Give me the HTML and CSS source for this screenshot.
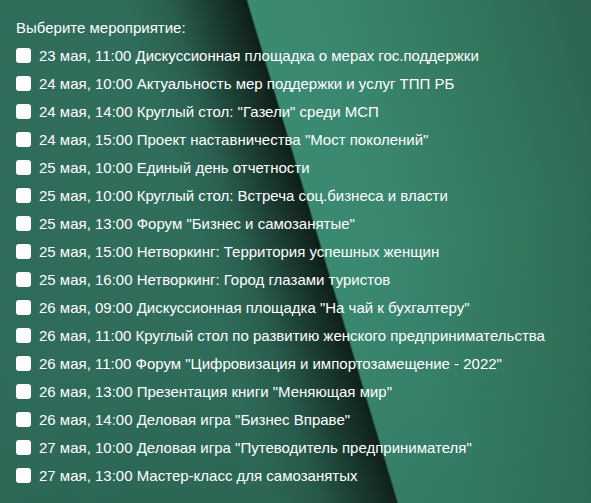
FILE: index.html
```html
<!DOCTYPE html>
<html lang="ru">
<head>
<meta charset="utf-8">
<title>Мероприятия</title>
<link rel="stylesheet" href="styles.css">
</head>
<body>
<form class="events">
  <div class="events__title">Выберите мероприятие:</div>
  <label class="event"><input type="checkbox" class="event__box"><span>23 мая, 11:00 Дискуссионная площадка о мерах гос.поддержки</span></label>
  <label class="event"><input type="checkbox" class="event__box"><span>24 мая, 10:00 Актуальность мер поддержки и услуг ТПП РБ</span></label>
  <label class="event"><input type="checkbox" class="event__box"><span>24 мая, 14:00 Круглый стол: "Газели" среди МСП</span></label>
  <label class="event"><input type="checkbox" class="event__box"><span>24 мая, 15:00 Проект наставничества "Мост поколений"</span></label>
  <label class="event"><input type="checkbox" class="event__box"><span>25 мая, 10:00 Единый день отчетности</span></label>
  <label class="event"><input type="checkbox" class="event__box"><span>25 мая, 10:00 Круглый стол: Встреча соц.бизнеса и власти</span></label>
  <label class="event"><input type="checkbox" class="event__box"><span>25 мая, 13:00 Форум "Бизнес и самозанятые"</span></label>
  <label class="event"><input type="checkbox" class="event__box"><span>25 мая, 15:00 Нетворкинг: Территория успешных женщин</span></label>
  <label class="event"><input type="checkbox" class="event__box"><span>25 мая, 16:00 Нетворкинг: Город глазами туристов</span></label>
  <label class="event"><input type="checkbox" class="event__box"><span>26 мая, 09:00 Дискуссионная площадка "На чай к бухгалтеру"</span></label>
  <label class="event"><input type="checkbox" class="event__box"><span>26 мая, 11:00 Круглый стол по развитию женского предпринимательства</span></label>
  <label class="event"><input type="checkbox" class="event__box"><span>26 мая, 11:00 Форум "Цифровизация и импортозамещение - 2022"</span></label>
  <label class="event"><input type="checkbox" class="event__box"><span>26 мая, 13:00 Презентация книги "Меняющая мир"</span></label>
  <label class="event"><input type="checkbox" class="event__box"><span>26 мая, 14:00 Деловая игра "Бизнес Вправе"</span></label>
  <label class="event"><input type="checkbox" class="event__box"><span>27 мая, 10:00 Деловая игра "Путеводитель предпринимателя"</span></label>
  <label class="event"><input type="checkbox" class="event__box"><span>27 мая, 13:00 Мастер-класс для самозанятых</span></label>
</form>
</body>
</html>
```
FILE: styles.css
```css
html {
  height: 100%;
  background-color: #2f6b5a;
  background-image:
    linear-gradient(160deg, rgba(0,0,0,0) 55%, rgba(20,50,40,0.2) 100%),
    linear-gradient(73.3deg,
      #2f6b5a 0px,
      #306d5b 260px,
      #2a5f4f 305px,
      #1c3f34 342px,
      #12261f 372px,
      #0f1f1a 380px,
      #3b8a72 382px,
      #3a8770 450px,
      #34795f 570px,
      #2c6351 710px);
}

body {
  margin: 0;
  font-family: "Liberation Sans", Arial, sans-serif;
  font-size: 15px;
  color: #ffffff;
}

.events {
  display: flex;
  flex-direction: column;
  padding: 14px 16px;
}

.events__title {
  line-height: 28px;
}

.event {
  display: flex;
  align-items: center;
  gap: 8px;
  height: 28px;
  line-height: 28px;
  white-space: nowrap;
}

.event__box {
  appearance: none;
  -webkit-appearance: none;
  width: 15px;
  height: 15px;
  margin: 0;
  border: none;
  border-radius: 3px;
  background: #ffffff;
  flex: none;
  position: relative;
  top: -1px;
}
```
